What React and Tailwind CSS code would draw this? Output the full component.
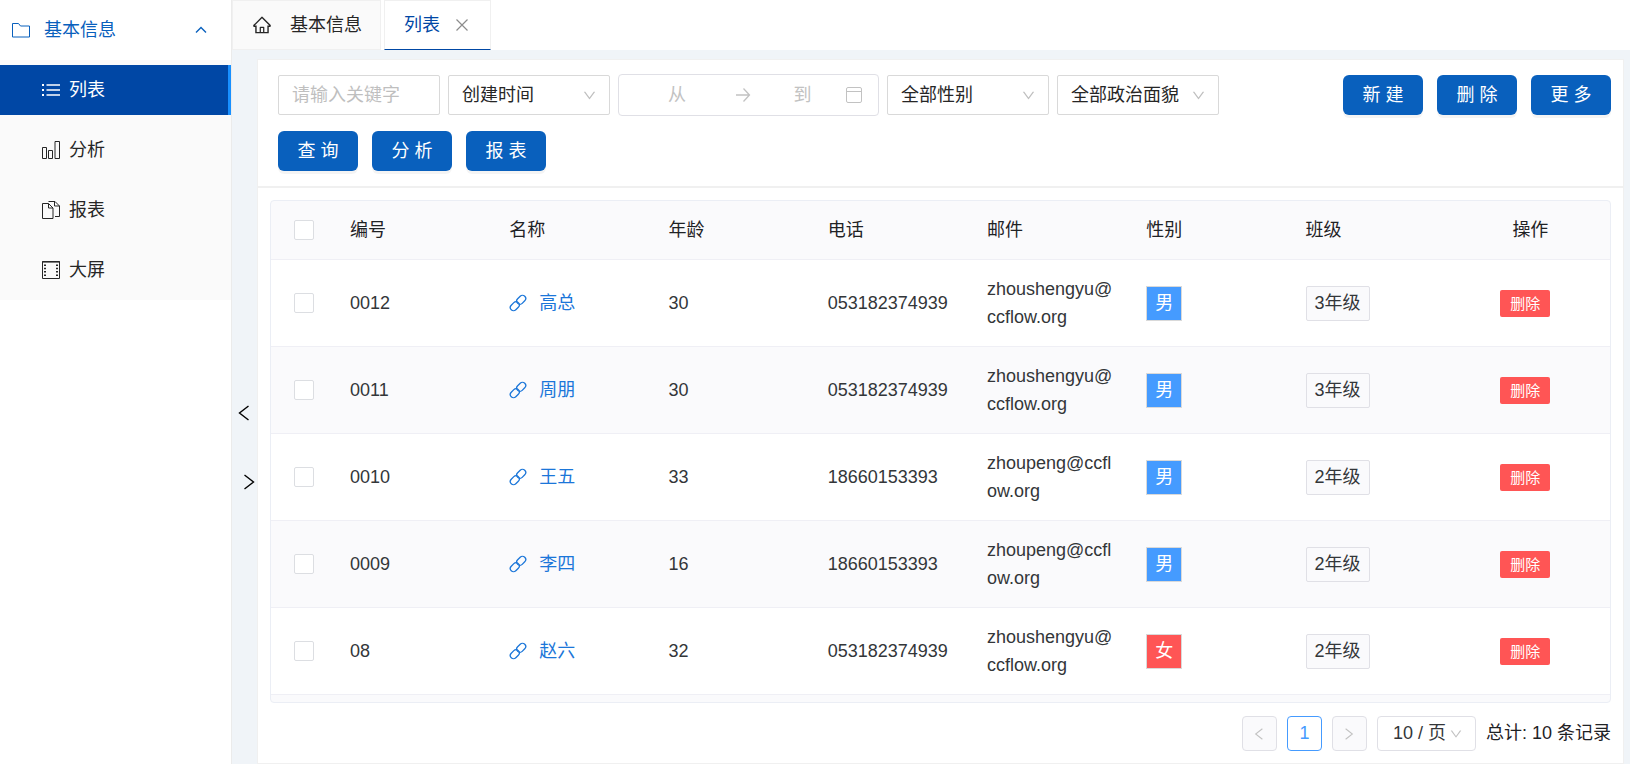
import React from "react";
import { AiOutlineHome, AiOutlineDown } from "react-icons/ai";

const FolderIcon = () => (
  <svg width="18" height="15" viewBox="0 0 18 15" fill="none" stroke="currentColor" aria-hidden="true">
    <path d="M.5 .5h6l2 2.5h9v11H.5z" />
  </svg>
);

const ListIcon = () => (
  <svg width="18" height="18" viewBox="0 0 18 18" fill="none" stroke="currentColor" aria-hidden="true">
    <path d="M4.5 4h13.5M4.5 9h13.5M4.5 14h13.5" strokeWidth="1.4" />
    <path d="M0 4h2M0 9h2M0 14h2" strokeWidth="2" />
  </svg>
);

const BarsIcon = () => (
  <svg width="18" height="18" viewBox="0 0 18 18" fill="none" stroke="currentColor" aria-hidden="true">
    <path d="M.5 6.5h4v11h-4zM6.5 9.5h4v8h-4zM13 .5h4.5v17H13z" />
  </svg>
);

const FilesIcon = () => (
  <svg width="18" height="18" viewBox="0 0 18 18" fill="none" stroke="currentColor" aria-hidden="true">
    <path d="M.5 2.5h6l4.5 4.5v10.5H.5zM6.5 2.5v4.5H11" />
    <path d="M6.5 .5h6.500l4.500 4.500v10.500H13M12.500 .5v4.500h5" />
  </svg>
);

const FilmIcon = () => (
  <svg width="18" height="18" viewBox="0 0 18 18" fill="none" stroke="currentColor" aria-hidden="true">
    <path d="M.5 .5h17v17H.5z" />
    <path d="M0 1h18" strokeWidth="2" strokeOpacity=".6" />
    <path d="M3 3.500v13M15 3.500v13" strokeWidth="2" strokeDasharray="1.500 1.800" />
  </svg>
);

const CalendarIcon = () => (
  <svg width="16" height="16" viewBox="0 0 16 16" fill="none" stroke="currentColor" aria-hidden="true">
    <rect x=".5" y=".5" width="15" height="15" rx="1.5" />
    <path d="M.5 4.500h15" />
  </svg>
);

const ArrowIcon = () => (
  <svg width="16" height="16" viewBox="0 0 16 16" fill="none" stroke="currentColor" strokeWidth="1.3" aria-hidden="true">
    <path d="M1 8h13.500M8.500 1.500 14.500 8l-6 6.500" />
  </svg>
);

const LinkIcon = () => (
  <svg width="18" height="18" viewBox="0 0 18 18" fill="none" stroke="currentColor" strokeWidth="1.3" aria-hidden="true">
    <rect x="-5" y="-3.200" width="10" height="6.400" rx="3.200" transform="translate(12.200 5.800) rotate(-45)" />
    <rect x="-5" y="-3.200" width="10" height="6.400" rx="3.200" transform="translate(5.800 12.200) rotate(-45)" />
  </svg>
);

const CloseIcon = () => (
  <svg width="12" height="12" viewBox="0 0 12 12" fill="none" stroke="currentColor" strokeWidth="1.2" aria-hidden="true">
    <path d="M.5 .5l11 11M11.500 .5l-11 11" />
  </svg>
);

const UpIcon = () => (
  <svg width="12" height="8" viewBox="0 0 12 8" fill="none" stroke="currentColor" strokeWidth="1.4" aria-hidden="true">
    <path d="M1 6.500 6 1.500l5 5" />
  </svg>
);

// Thin angle brackets, used by the collapse strip and the pager
const LeftIcon = ({ size }) => (
  <svg width={size} height={size} viewBox="0 0 16 16" fill="none" stroke="currentColor" strokeWidth="1.4" aria-hidden="true">
    <path d="M12.500 1 3.500 8l9 7" />
  </svg>
);

const RightIcon = ({ size }) => (
  <svg width={size} height={size} viewBox="0 0 16 16" fill="none" stroke="currentColor" strokeWidth="1.4" aria-hidden="true">
    <path d="M3.500 1l9 7-9 7" />
  </svg>
);

const MENU = [
  { label: "列表", icon: <ListIcon />, active: true },
  { label: "分析", icon: <BarsIcon /> },
  { label: "报表", icon: <FilesIcon /> },
  { label: "大屏", icon: <FilmIcon /> },
];

const COLUMNS = ["编号", "名称", "年龄", "电话", "邮件", "性别", "班级"];

const ROWS = [
  { no: "0012", name: "高总", age: 30, tel: "053182374939", mail: "zhoushengyu@ccflow.org", sex: "男", grade: "3年级" },
  { no: "0011", name: "周朋", age: 30, tel: "053182374939", mail: "zhoushengyu@ccflow.org", sex: "男", grade: "3年级" },
  { no: "0010", name: "王五", age: 33, tel: "18660153393", mail: "zhoupeng@ccflow.org", sex: "男", grade: "2年级" },
  { no: "0009", name: "李四", age: 16, tel: "18660153393", mail: "zhoupeng@ccflow.org", sex: "男", grade: "2年级" },
  { no: "08", name: "赵六", age: 32, tel: "053182374939", mail: "zhoushengyu@ccflow.org", sex: "女", grade: "2年级" },
];

const SEX_COLORS = {
  男: "bg-[#459bff]",
  女: "bg-[#ff5555]",
};

function Sidebar() {
  return (
    <nav className="w-[232px] shrink-0 border-r border-[#ebebeb] bg-white">
      <button className="flex h-[60px] w-full items-center pr-6 pl-3 text-[#0960bd]">
        <FolderIcon />
        <span className="ml-3.5 flex-1 text-left">基本信息</span>
        <UpIcon />
      </button>
      <ul className="bg-[#fafafa] py-[5px]">
        {MENU.map((m) => (
          <li key={m.label} className="mb-2.5 last:mb-0">
            <a
              href="#"
              className={`flex h-[50px] items-center gap-[9px] pl-[42px] ${
                m.active ? "border-r-3 border-[#1890ff] bg-[#0047a5] text-white" : "text-[#262626]"
              }`}
            >
              {m.icon}
              {m.label}
            </a>
          </li>
        ))}
      </ul>
    </nav>
  );
}

function Tabs() {
  return (
    <div className="flex h-[50px] shrink-0 gap-[3px] bg-white">
      <button className="flex items-center border border-[#f0f0f0] bg-[#fafafa] pr-[18px] pl-[19px]">
        <AiOutlineHome size={20} />
        <span className="ml-[18px]">基本信息</span>
      </button>
      <div className="flex items-center border border-[#f0f0f0] border-b-[#0047a5] pr-[22px] pl-[19px] text-[#0047a5]">
        <button>列表</button>
        <button aria-label="关闭" className="ml-4 text-[#8c8c8c]">
          <CloseIcon />
        </button>
      </div>
    </div>
  );
}

function Select({ label }) {
  return (
    <div className="relative w-[162px]">
      <select aria-label={label} className="h-10 w-full appearance-none rounded-xs border border-[#d9d9d9] bg-white pl-[13px]">
        <option>{label}</option>
      </select>
      <AiOutlineDown size={15} className="pointer-events-none absolute top-[13px] right-[13px] text-[#bfbfbf]" />
    </div>
  );
}

function Button({ children }) {
  return (
    <button className="h-10 w-20 rounded-md bg-[#0960bd] text-white shadow-[0_3px_0_rgba(0,0,0,0.045)]">{children}</button>
  );
}

function Toolbar() {
  return (
    <div className="flex items-start border border-[#f0f0f0] bg-white pt-[15px] pr-3 pb-[15px] pl-5">
      <div className="flex-1">
        <div className="flex flex-wrap items-center gap-2">
          <input
            aria-label="关键字"
            placeholder="请输入关键字"
            className="h-10 w-[162px] rounded-xs border border-[#d9d9d9] px-[13px] placeholder:text-[#bfbfbf]"
          />
          <Select label="创建时间" />
          <div className="-my-px flex h-[42px] w-[261px] items-center rounded-sm border border-[#e0e0e6] pr-4 text-[#c2c2c2]">
            <input aria-label="开始日期" placeholder="从" className="w-[116px] text-center placeholder:text-[#c2c2c2]" />
            <ArrowIcon />
            <input aria-label="结束日期" placeholder="到" className="w-0 flex-1 pl-2 text-center placeholder:text-[#c2c2c2]" />
            <CalendarIcon />
          </div>
          <Select label="全部性别" />
          <Select label="全部政治面貌" />
        </div>
        <div className="mt-4 flex gap-3.5">
          <Button>查 询</Button>
          <Button>分 析</Button>
          <Button>报 表</Button>
        </div>
      </div>
      <div className="flex gap-3.5">
        <Button>新 建</Button>
        <Button>删 除</Button>
        <Button>更 多</Button>
      </div>
    </div>
  );
}

function Checkbox({ label }) {
  return (
    <input
      type="checkbox"
      aria-label={label}
      className="mx-auto block size-5 appearance-none rounded-xs border border-[#dcdee2] bg-white checked:bg-[#0960bd]"
    />
  );
}

function DataTable() {
  return (
    <div className="min-h-0 flex-1 overflow-hidden rounded-sm border border-[#ebeef5] bg-[#fafafc]">
      <table className="w-full table-fixed border-separate border-spacing-0 text-left text-[#333639]">
        <thead>
          <tr className="h-[59px] text-[#1f2225]">
            <th className="w-[65px] border-b border-[#efeff5]">
              <Checkbox label="全选" />
            </th>
            {COLUMNS.map((c) => (
              <th key={c} className="border-b border-[#efeff5] pl-3.5 font-normal">{c}</th>
            ))}
            <th className="border-b border-[#efeff5] text-center font-normal">操作</th>
          </tr>
        </thead>
        <tbody>
          {ROWS.map((r) => (
            <tr key={r.no} className="bg-white even:bg-[#fafafc] [&>td]:border-b [&>td]:border-[#efeff5] [&>td]:py-[15px]">
              <td>
                <Checkbox label={r.no} />
              </td>
              <td className="pl-3.5">{r.no}</td>
              <td className="pl-3.5">
                <a href="#" className="flex items-center gap-3 text-[#1b76d9]">
                  <LinkIcon />
                  {r.name}
                </a>
              </td>
              <td className="pl-3.5">{r.age}</td>
              <td className="pl-3.5">{r.tel}</td>
              <td className="pr-4 pl-3.5 leading-7 break-all">{r.mail}</td>
              <td className="pl-3.5">
                <span className={`block w-fit border border-[#d9d9d9] px-2 py-[3px] text-white ${SEX_COLORS[r.sex]}`}>{r.sex}</span>
              </td>
              <td className="pl-3.5">
                <span className="block w-fit rounded-xs border border-[#e0e0e6] bg-[#fafafc] px-2 py-[3px]">{r.grade}</span>
              </td>
              <td className="text-center">
                <button className="mr-2.5 h-[27px] rounded-xs bg-[#ff5555] px-2.5 text-[15px] text-white">删除</button>
              </td>
            </tr>
          ))}
        </tbody>
      </table>
    </div>
  );
}

function Pager() {
  return (
    <div className="flex shrink-0 items-center justify-end gap-2.5 pt-[13px] pb-3">
      <button aria-label="上一页" className="grid size-[35px] place-items-center rounded-sm border border-[#e0e0e6] bg-[#fafafc] text-[#c2c2c2]">
        <LeftIcon size={12} />
      </button>
      <button className="size-[35px] rounded-sm border border-[#459bff] text-[#459bff]">1</button>
      <button aria-label="下一页" className="grid size-[35px] place-items-center rounded-sm border border-[#e0e0e6] bg-[#fafafc] text-[#c2c2c2]">
        <RightIcon size={12} />
      </button>
      <div className="relative w-[99px]">
        <select aria-label="每页条数" className="h-[35px] w-full appearance-none rounded-sm border border-[#e0e0e6] bg-white pl-[15px] text-[#333639]">
          <option>10 / 页</option>
        </select>
        <AiOutlineDown size={14} className="pointer-events-none absolute top-[11px] right-[13px] text-[#c2c2c2]" />
      </div>
      <span className="text-[#1f2225]">总计: 10 条记录</span>
    </div>
  );
}

export default function App() {
  return (
    <div className="flex h-screen overflow-hidden bg-[#f0f4f8] font-['Liberation_Sans','Noto_Sans_CJK_SC',sans-serif] text-[18px] leading-[27px] text-[#262626]">
      <Sidebar />
      <div className="flex min-w-0 flex-1 flex-col">
        <Tabs />
        <div className="flex min-h-0 flex-1">
          <div className="flex w-[25px] shrink-0 flex-col justify-center gap-[53px] pt-20 text-black">
            <button aria-label="收起" className="self-start pl-1">
              <LeftIcon size={16} />
            </button>
            <button aria-label="展开" className="self-end">
              <RightIcon size={16} />
            </button>
          </div>
          <main className="flex min-w-0 flex-1 flex-col pt-[9px] pr-1.5">
            <Toolbar />
            <div className="flex min-h-0 flex-1 flex-col border border-[#f0f0f0] bg-white px-3 pt-3">
              <DataTable />
              <Pager />
            </div>
          </main>
        </div>
      </div>
    </div>
  );
}
